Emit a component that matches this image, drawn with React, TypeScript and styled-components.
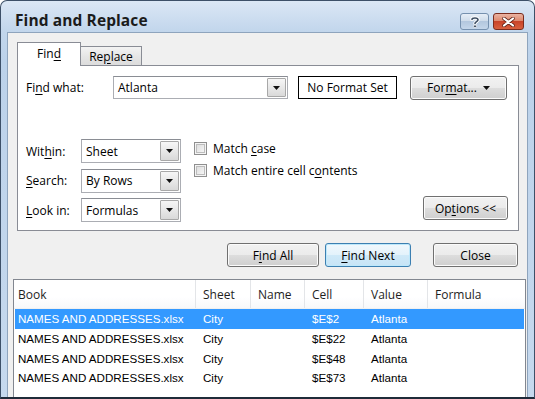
import React from "react";
import styled, { createGlobalStyle, css } from "styled-components";

const Global = createGlobalStyle`
  html, body { margin: 0; padding: 0; background: #ffffff; }
  body {
    width: 535px; height: 399px; overflow: hidden;
    font-family: "Open Sans", "Noto Sans", sans-serif;
    font-size: 12px; color: #000;
  }
  * { box-sizing: border-box; }
`;

const Window = styled.div`
  width: 535px;
  height: 399px;
  border: 1px solid #3d5068;
  border-bottom: 2px solid #1f2b39;
  border-radius: 7px 7px 0 0;
  background: linear-gradient(#dbe7f5 0px, #c2d6ec 30px, #bcd2ea 60px, #c6d9ee 399px);
  display: flex;
  flex-direction: column;
  overflow: hidden;
`;

const TitleBar = styled.div`
  height: 31px;
  display: flex;
  align-items: center;
  padding: 4px 10px 0 14px;
`;

const Title = styled.div`
  flex: 1;
  font-family: "Open Sans", sans-serif;
  font-weight: 700;
  font-size: 15.5px;
  letter-spacing: 0.1px;
  color: #1b1b1b;
  padding-top: 2px;
`;

const CaptionButton = styled.div<{ $kind: "help" | "close" }>`
  height: 17px;
  margin-top: 6px;
  border-radius: 3px;
  display: flex;
  align-items: center;
  justify-content: center;
  ${(p) =>
    p.$kind === "help"
      ? css`
          width: 29px;
          margin-right: 4px;
          border: 1px solid #7590ae;
          background: linear-gradient(#e6eef7 0%, #cfdcea 45%, #b3c7de 50%, #c4d6ea 100%);
        `
      : css`
          width: 31px;
          border: 1px solid #7b2d1f;
          background: linear-gradient(#eab3a2 0%, #de8a70 45%, #c9442a 50%, #d8603e 100%);
        `}
`;

const Client = styled.div`
  flex: 1;
  margin: 0 6px;
  border: 1px solid #8ea4bd;
  border-bottom: none;
  background: #f0f0f0;
  display: flex;
  flex-direction: column;
  padding: 9px 0 0 9px;
`;

const TabRow = styled.div`
  display: flex;
  align-items: flex-end;
  height: 24px;
  margin-bottom: -1px;
  position: relative;
  z-index: 1;
`;

const Tab = styled.div<{ $active?: boolean }>`
  display: flex;
  align-items: center;
  justify-content: center;
  border: 1px solid #898c95;
  ${(p) =>
    p.$active
      ? css`
          width: 64px;
          height: 24px;
          background: #ffffff;
          border-bottom: none;
          padding-bottom: 2px;
        `
      : css`
          width: 61px;
          height: 20px;
          border-left: none;
          background: linear-gradient(#f3f3f3, #e6e6e6 50%, #dcdcdc);
          border-bottom: 1px solid #898c95;
          padding-top: 1px;
        `}
`;

const Panel = styled.div`
  width: 502px;
  height: 166px;
  border: 1px solid #898c95;
  background: #ffffff;
  display: flex;
  flex-direction: column;
  padding: 10px 10px 8px 8px;
`;

const FindRow = styled.div`
  display: flex;
  align-items: center;
  height: 23px;
`;

const FieldLabel = styled.div<{ $w: number }>`
  width: ${(p) => p.$w}px;
  flex: none;
`;

const Combo = styled.div<{ $w: number; $h: number }>`
  width: ${(p) => p.$w}px;
  height: ${(p) => p.$h}px;
  flex: none;
  display: flex;
  border: 1px solid #abadb3;
  border-top-color: #8a8d94;
  background: #ffffff;
`;

const ComboText = styled.div`
  flex: 1;
  display: flex;
  align-items: center;
  padding-left: 4px;
`;

const DropButton = styled.div`
  width: 19px;
  margin: 1px;
  border: 1px solid #a8a8a8;
  border-radius: 1px;
  background: linear-gradient(#f6f6f6, #e8e8e8 50%, #d9d9d9);
  display: flex;
  align-items: center;
  justify-content: center;
`;

const FormatBox = styled.div`
  width: 99px;
  height: 23px;
  margin-left: 10px;
  border: 1px solid #000000;
  display: flex;
  align-items: center;
  justify-content: center;
`;

const Button = styled.div<{ $w: number; $focus?: boolean; $ml?: number }>`
  width: ${(p) => p.$w}px;
  height: 24px;
  flex: none;
  margin-left: ${(p) => p.$ml ?? 0}px;
  border-radius: 3px;
  display: flex;
  align-items: center;
  justify-content: center;
  gap: 6px;
  ${(p) =>
    p.$focus
      ? css`
          border: 1px solid #3c7fb1;
          box-shadow: inset 0 0 0 1px #bde8fb;
          background: linear-gradient(#f1f8fd 0%, #e3f2fb 50%, #cfe9f8 51%, #c7e4f6 100%);
        `
      : css`
          border: 1px solid #707070;
          box-shadow: inset 0 0 0 1px #fbfbfb;
          background: linear-gradient(#f2f2f2 0%, #ebebeb 50%, #dddddd 51%, #cfcfcf 100%);
        `}
`;

const OptionsArea = styled.div`
  margin-top: auto;
  display: flex;
  align-items: flex-end;
`;

const SelectGrid = styled.div`
  display: grid;
  grid-template-columns: 55px 100px;
  grid-auto-rows: 24px;
  row-gap: 5.5px;
  align-items: center;
`;

const CheckColumn = styled.div`
  align-self: flex-start;
  margin-left: 13px;
  display: flex;
  flex-direction: column;
  gap: 4px;
`;

const CheckRow = styled.div`
  height: 18px;
  display: flex;
  align-items: center;
  gap: 6px;
`;

const CheckBox = styled.div`
  width: 13px;
  height: 13px;
  border: 1px solid #8f8f8f;
  box-shadow: inset 0 0 0 1px #f4f4f4, inset 0 0 0 2px #bdbdbd;
  background-image: linear-gradient(135deg, #d8d8d8, #fbfbfb);
`;

const OptionsButton = styled(Button)`
  margin-left: auto;
  margin-bottom: 2px;
`;

const ActionRow = styled.div`
  display: flex;
  width: 501px;
  justify-content: flex-end;
  margin-top: 12px;
`;

const List = styled.div`
  margin: 12px 0 0 -4px;
  width: 513px;
  flex: 1;
  border: 1px solid #828790;
  border-bottom: none;
  background: #ffffff;
  display: flex;
  flex-direction: column;
`;

const HeaderRow = styled.div`
  display: flex;
  height: 29px;
  background: linear-gradient(#ffffff, #ffffff 60%, #f7f8fa);
  border-bottom: 1px solid #f0f0f0;
`;

const HeaderCell = styled.div<{ $w: number; $last?: boolean }>`
  width: ${(p) => p.$w}px;
  flex: ${(p) => (p.$last ? 1 : "none")};
  display: flex;
  align-items: center;
  padding-left: ${(p) => (p.$w === 182 ? 4 : 7)}px;
  border-right: ${(p) => (p.$last ? "none" : "1px solid #e3e5e8")};
  font-size: 12px;
  color: #1e1e1e;
`;

const Row = styled.div<{ $sel?: boolean }>`
  display: flex;
  height: 19.7px;
  margin: 0 1px;
  align-items: center;
  font-family: "Liberation Sans", "DejaVu Sans", sans-serif;
  font-size: 11.6px;
  ${(p) =>
    p.$sel
      ? css`
          background: #3399ff;
          color: #ffffff;
        `
      : css`
          color: #000000;
        `}
`;

const Cell = styled.div<{ $w: number; $first?: boolean }>`
  width: ${(p) => p.$w}px;
  flex: none;
  padding-left: ${(p) => (p.$first ? 3 : 7)}px;
  white-space: nowrap;
`;

const U = styled.span`
  text-decoration: underline;
  text-underline-offset: 2px;
`;

const Arrow = () => (
  <svg width="7" height="4" viewBox="0 0 7 4">
    <path d="M0 0 H7 L3.5 4 Z" fill="#111" />
  </svg>
);

const Select = ({ text }: { text: string }) => (
  <Combo $w={100} $h={24}>
    <ComboText>{text}</ComboText>
    <DropButton>
      <Arrow />
    </DropButton>
  </Combo>
);

const HelpGlyph = () => (
  <svg width="10" height="12" viewBox="0 0 10 12">
    <path
      d="M2 3.5 C2 1.5 8 1.2 8 3.8 C8 5.6 5 5.6 5 7.6"
      stroke="#ffffff"
      strokeWidth="3.4"
      fill="none"
      strokeLinecap="round"
    />
    <path
      d="M2 3.5 C2 1.5 8 1.2 8 3.8 C8 5.6 5 5.6 5 7.6"
      stroke="#3f4f63"
      strokeWidth="1.6"
      fill="none"
      strokeLinecap="round"
    />
    <circle cx="5" cy="10.3" r="1.5" fill="#3f4f63" stroke="#ffffff" strokeWidth="0.8" />
  </svg>
);

const CloseGlyph = () => (
  <svg width="13" height="10" viewBox="0 0 13 10">
    <path d="M2 1.5 L11 8.5 M11 1.5 L2 8.5" stroke="#5a2016" strokeWidth="3.6" strokeLinecap="round" />
    <path d="M2 1.5 L11 8.5 M11 1.5 L2 8.5" stroke="#ffffff" strokeWidth="2.2" strokeLinecap="round" />
  </svg>
);

const results = [
  { cell: "$E$2", sel: true },
  { cell: "$E$22" },
  { cell: "$E$48" },
  { cell: "$E$73" },
];

export default function App() {
  return (
    <>
      <Global />
      <Window>
        <TitleBar>
          <Title>Find and Replace</Title>
          <CaptionButton $kind="help">
            <HelpGlyph />
          </CaptionButton>
          <CaptionButton $kind="close">
            <CloseGlyph />
          </CaptionButton>
        </TitleBar>
        <Client>
          <TabRow>
            <Tab $active>
              <span>
                Fin<U>d</U>
              </span>
            </Tab>
            <Tab>
              <span>
                Re<U>p</U>lace
              </span>
            </Tab>
          </TabRow>
          <Panel>
            <FindRow>
              <FieldLabel $w={87}>
                Fi<U>n</U>d what:
              </FieldLabel>
              <Combo $w={175} $h={23}>
                <ComboText>Atlanta</ComboText>
                <DropButton>
                  <Arrow />
                </DropButton>
              </Combo>
              <FormatBox>No Format Set</FormatBox>
              <Button $w={97} $ml={13}>
                <span>
                  For<U>m</U>at...
                </span>
                <Arrow />
              </Button>
            </FindRow>
            <OptionsArea>
              <SelectGrid>
                <FieldLabel $w={55}>
                  Wit<U>h</U>in:
                </FieldLabel>
                <Select text="Sheet" />
                <FieldLabel $w={55}>
                  <U>S</U>earch:
                </FieldLabel>
                <Select text="By Rows" />
                <FieldLabel $w={55}>
                  <U>L</U>ook in:
                </FieldLabel>
                <Select text="Formulas" />
              </SelectGrid>
              <CheckColumn>
                <CheckRow>
                  <CheckBox />
                  <span>
                    Match <U>c</U>ase
                  </span>
                </CheckRow>
                <CheckRow>
                  <CheckBox />
                  <span>
                    Match entire cell c<U>o</U>ntents
                  </span>
                </CheckRow>
              </CheckColumn>
              <OptionsButton $w={85}>
                <span>
                  Op<U>t</U>ions &lt;&lt;
                </span>
              </OptionsButton>
            </OptionsArea>
          </Panel>
          <ActionRow>
            <Button $w={92}>
              <span>
                F<U>i</U>nd All
              </span>
            </Button>
            <Button $w={86} $ml={6} $focus>
              <span>
                <U>F</U>ind Next
              </span>
            </Button>
            <Button $w={85} $ml={22}>
              Close
            </Button>
          </ActionRow>
          <List>
            <HeaderRow>
              <HeaderCell $w={182}>Book</HeaderCell>
              <HeaderCell $w={55}>Sheet</HeaderCell>
              <HeaderCell $w={54}>Name</HeaderCell>
              <HeaderCell $w={59}>Cell</HeaderCell>
              <HeaderCell $w={64}>Value</HeaderCell>
              <HeaderCell $w={60} $last>
                Formula
              </HeaderCell>
            </HeaderRow>
            {results.map((r) => (
              <Row key={r.cell} $sel={r.sel}>
                <Cell $w={181} $first>
                  NAMES AND ADDRESSES.xlsx
                </Cell>
                <Cell $w={55}>City</Cell>
                <Cell $w={54}></Cell>
                <Cell $w={59}>{r.cell}</Cell>
                <Cell $w={64}>Atlanta</Cell>
                <Cell $w={40}></Cell>
              </Row>
            ))}
          </List>
        </Client>
      </Window>
    </>
  );
}
